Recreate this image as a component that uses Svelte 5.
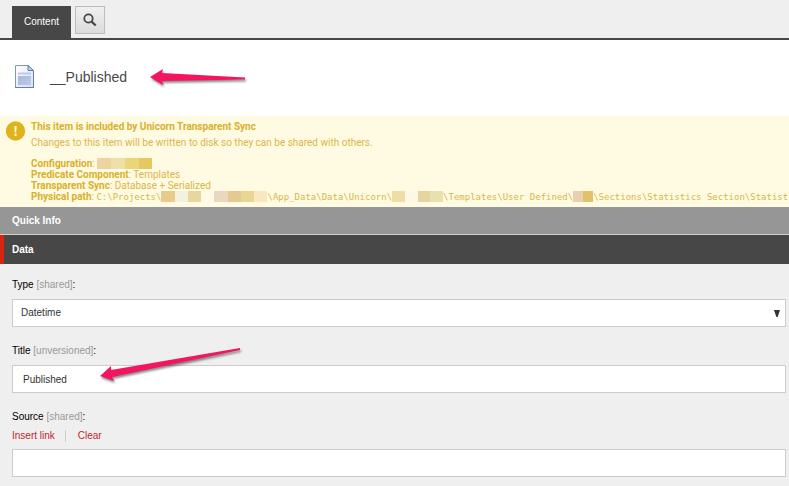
<script>
  const blocks = {
    config: ['#eed29f', '#f0e0a8', '#ead57b', '#e3c95f'],
    project: ['#e7cb8b', '#f5f1df', '#e7d79e', '#fefae6', '#e8d8c2', '#e4ca90', '#ead694', '#f7e8bf'],
    folder: ['#efdda6', '#fcf8e5', '#e6d4a0', '#eadfae'],
    section: ['#e9cfae', '#e2c16c']
  };
  let type = $state('Datetime');
  let title = $state('Published');
  let source = $state('');
</script>

{#snippet mask(name)}
  <span class="mask {name}">{#each blocks[name] as color}<i style:background={color}></i>{/each}</span>
{/snippet}

<div class="page">
  <nav class="tabs">
    <button class="tab">Content</button>
    <button class="search" aria-label="Search">
      <svg width="14" height="14" viewBox="0 0 14 14" fill="none" stroke="#474747">
        <circle cx="5.5" cy="5.5" r="4.2" stroke-width="1.8" />
        <path d="M8.5 8.5 12.7 12.5" stroke-width="2.4" />
      </svg>
    </button>
  </nav>

  <header>
    <svg class="doc" width="22" height="26" viewBox="0 0 22 26">
      <defs>
        <linearGradient id="paper" x1="0" y1="0" x2="1" y2="1">
          <stop offset="0" stop-color="#fff" /><stop offset="1" stop-color="#d5e0f2" />
        </linearGradient>
        <linearGradient id="block" x1="0" y1="0" x2="1" y2="1">
          <stop offset="0" stop-color="#a9b9db" /><stop offset="1" stop-color="#bccae5" />
        </linearGradient>
      </defs>
      <path d="M1.5 1.5h13l5 5v17h-18z" fill="url(#paper)" stroke="#8097c0" />
      <path d="M1 23.5h18.5V7" fill="none" stroke="#6680ae" />
      <path d="M14 1.5v5h5.5z" fill="#b9d3ea" stroke="#5c7cae" />
      <path d="M4 9.5h13" stroke="#bccae5" stroke-width="2" />
      <path d="M4 12h13v9H4z" fill="url(#block)" />
    </svg>
    <h1>__Published</h1>
    <svg class="arrow first" width="100" height="24" viewBox="0 0 100 24">
      <path d="M2 9 15 1 14 5 97 9.5v2L14 13l1 4z" fill="#f51461" />
    </svg>
  </header>

  <section class="notice">
    <svg width="20" height="20" viewBox="0 0 20 20">
      <circle cx="9.5" cy="10" r="9.7" fill="#deb31b" />
      <path d="M8.4 5h2.2l-.4 6.4H8.8z" fill="#fffbe3" />
      <circle cx="9.5" cy="13.8" r="1.2" fill="#fffbe3" />
    </svg>
    <div class="message">
      <h2>This item is included by Unicorn Transparent Sync</h2>
      <p class="intro">Changes to this item will be written to disk so they can be shared with others.</p>
      <p><b>Configuration</b>: {@render mask('config')}</p>
      <p><b>Predicate Component</b>: Templates</p>
      <p><b>Transparent Sync</b>: Database + Serialized</p>
      <p><b>Physical path</b>: <code>C:\Projects\{@render mask('project')}\App_Data\Data\Unicorn\{@render mask('folder')}\Templates\User Defined\{@render mask('section')}\Sections\Statistics Section\Statist</code></p>
    </div>
  </section>

  <button class="bar quick">Quick Info</button>
  <button class="bar data">Data</button>

  <form>
    <div class="field">
      <label for="type">Type <span>[shared]</span>:</label>
      <div class="select">
        <select id="type" bind:value={type}><option>Datetime</option></select>
        <svg width="6" height="7" viewBox="0 0 6 7"><path d="M0 0h6L3.6 7H2.4z" fill="#333" /></svg>
      </div>
    </div>
    <div class="field">
      <label for="title">Title <span>[unversioned]</span>:</label>
      <input id="title" bind:value={title} />
      <svg class="arrow second" width="146" height="40" viewBox="0 0 146 40">
        <path d="M2 31 13 21V25L142 3v2L14 32l2 4z" fill="#f51461" />
      </svg>
    </div>
    <div class="field">
      <label for="source">Source <span>[shared]</span>:</label>
      <div class="links"><a href="#insert">Insert link</a><a href="#clear">Clear</a></div>
      <input id="source" bind:value={source} />
    </div>
  </form>
</div>

<style>
  :global(body) { margin: 0; background: #efefef; }
  .page {
    font: 10px/12px "Liberation Sans", Arial, sans-serif;
    color: #222;
    overflow: hidden;
  }
  h1, h2, p { margin: 0; }
  button, input, select { font: inherit; border-radius: 0; box-sizing: border-box; }
  .tabs {
    display: flex;
    gap: 4px;
    padding: 6px 12px 0;
    border-bottom: 2px solid #474747;
  }
  .tab {
    height: 32px;
    padding: 0 12px;
    border: 0;
    background: #474747;
    color: #fff;
  }
  .search {
    display: grid;
    place-items: center;
    width: 30px;
    height: 28px;
    padding: 0;
    border: 1px solid #bdbdbd;
    background: linear-gradient(#f0f0f0, #dcdcdc);
  }
  header {
    position: relative;
    display: flex;
    align-items: center;
    gap: 14px;
    height: 76px;
    padding: 0 14px 3px;
    background: #fff;
    box-sizing: border-box;
  }
  h1 { font-size: 14px; line-height: 18px; font-weight: 400; color: #474747; }
  .arrow { position: absolute; pointer-events: none; filter: drop-shadow(1px 2px 1px #0007); }
  .first { left: 148px; top: 28px; }
  .second { left: 86px; top: 0; }
  .notice {
    display: flex;
    gap: 5px;
    padding: 5px 0 4px 6px;
    background: #fffbe3;
    color: #dbb548;
    font-family: Roboto, sans-serif;
  }
  .notice > svg { flex: none; }
  .message { white-space: nowrap; line-height: 11px; }
  h2 { font-size: 10px; line-height: 12px; color: #d9af2c; }
  .intro { padding: 4px 0 10px; }
  b { color: #d9af2c; }
  code { font: 9px/11px "DejaVu Sans Mono", monospace; }
  .mask { display: inline-flex; height: 11px; vertical-align: top; }
  .mask i { flex: 1; }
  .config { width: 55px; }
  .project { width: 106px; }
  .folder { width: 51px; }
  .section { width: 20px; }
  .bar {
    display: block;
    width: 100%;
    border: 0;
    padding: 0 12px;
    text-align: left;
    font-weight: 700;
    color: #fff;
  }
  .quick { height: 28px; background: #969696; border-bottom: 1px solid #d0d0d0; }
  .data { height: 29px; background: #474747; border-left: 4px solid #d9230f; padding-left: 8px; }
  form { display: grid; gap: 18px; padding: 15px 3px 8px 12px; }
  .field { position: relative; display: flex; flex-direction: column; gap: 8px; }
  label { color: #000; }
  label span { color: #999; }
  input, select {
    width: 100%;
    height: 28px;
    padding: 0 10px;
    border: 1px solid #ccc;
    background: #fff;
    color: #333;
    outline: 0;
  }
  select { appearance: none; padding: 0 8px; }
  .select { display: grid; align-items: center; }
  .select > * { grid-area: 1 / 1; }
  .select svg { justify-self: end; margin-right: 6px; pointer-events: none; }
  .links { display: flex; margin: -1px 0; }
  .links a { color: #c1272d; text-decoration: none; }
  .links a + a { margin-left: 10px; padding-left: 12px; border-left: 1px solid #ccc; }
</style>
